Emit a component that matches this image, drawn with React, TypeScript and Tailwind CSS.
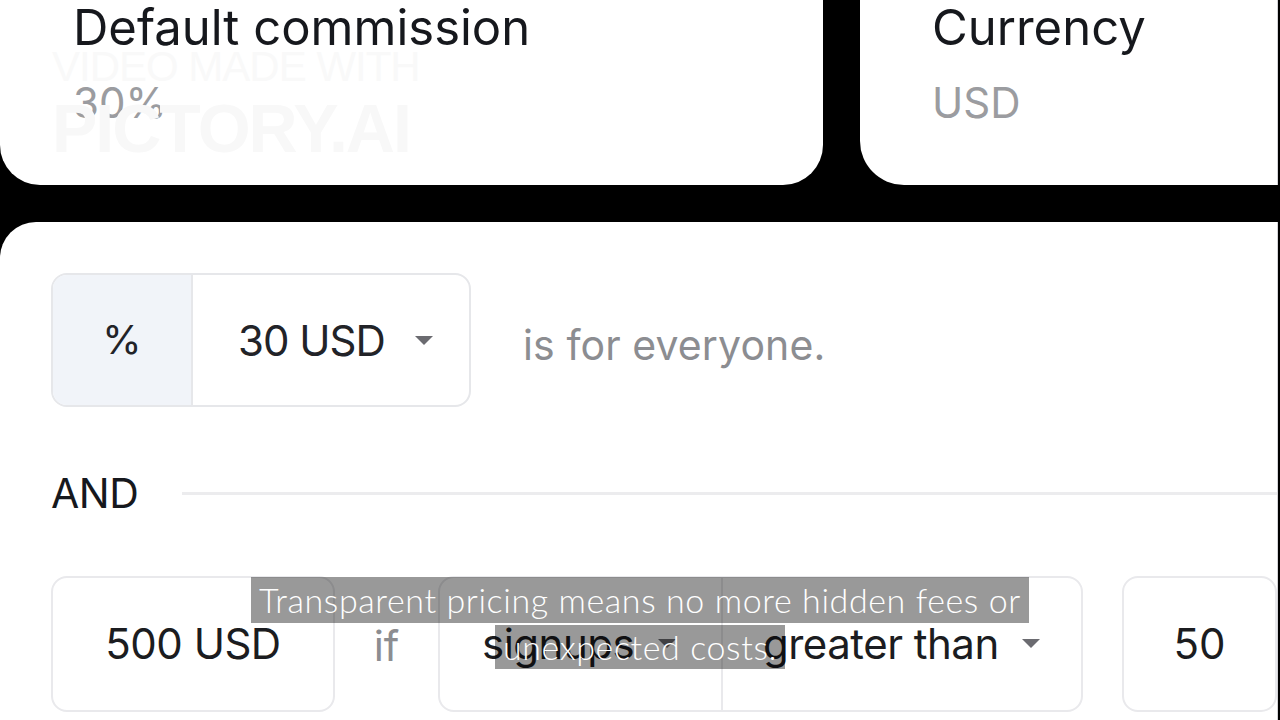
import { useState } from 'react';

const font = { fontFamily: 'Inter, "Noto Sans", sans-serif' };

function Caret({ gap = 'ml-7' }: { gap?: string }) {
  return <span className={`${gap} inline-block h-0 w-0 border-x-[9px] border-t-[9px] border-x-transparent border-t-[#6b6b70]`} />;
}

function InfoCard({ label, value, className }: { label: string; value: string; className: string }) {
  return (
    <div className={`relative h-[185px] bg-white ${className}`}>
      <div className="pt-[3px] text-[49px] leading-[50px] text-[#16181d]">{label}</div>
      <div className="mt-[26px] text-[42px] leading-[48px] text-[#9b9ca0]">{value}</div>
    </div>
  );
}

export default function App() {
  const [unit] = useState('30 USD');

  return (
    <div className="relative h-[720px] w-[1280px] overflow-hidden bg-black" style={font}>
      <div className="flex gap-[37px] pr-[2px]">
        <InfoCard label="Default commission" value="30%" className="w-[823px] rounded-b-[40px] pl-[73px]" />
        <InfoCard label="Currency" value="USD" className="flex-1 rounded-bl-[44px] border-r border-[#d4d4d8] pl-[72px]" />
      </div>

      {/* faint watermark */}
      <div
        className="pointer-events-none absolute left-[52px] top-[46px] leading-none text-[#f9f9f9]"
        style={{ fontFamily: '"Liberation Sans Narrow", "Liberation Sans", sans-serif' }}
      >
        <div className="text-[42px] tracking-[-1px]">VIDEO MADE WITH</div>
        <div className="mt-[6px] text-[68px] font-bold tracking-[-2px] text-[#f8f8f8]">PICTORY.AI</div>
      </div>

      <div className="mt-[37px] mr-[2px] h-[500px] rounded-tl-[36px] border-r border-[#d4d4d8] bg-white pl-[51px] pt-[51px]">
        <div className="flex items-center">
          <div className="flex h-[134px] w-[420px] overflow-hidden rounded-[16px] border-2 border-[#e6e7ea]">
            <div className="flex w-[140px] items-center justify-center border-r-2 border-[#e6e7ea] bg-[#f1f4f9] text-[40px] text-[#222328]">%</div>
            <div className="flex flex-1 items-center pl-[45px] text-[42px] tracking-[-1px] text-[#222328]">
              {unit}
              <Caret gap="ml-[30px]" />
            </div>
          </div>
          <div className="ml-[52px] pt-[12px] text-[41px] tracking-[0.1px] text-[#8c8d91]">is for everyone.</div>
        </div>

        <div className="mt-[56px] flex items-center">
          <div className="text-[41px] tracking-[-0.5px] text-[#16181d]">AND</div>
          <div className="ml-[44px] h-[3px] flex-1 bg-[#ececee]" />
        </div>

        <div className="mt-[51px] flex items-center">
          <div className="flex h-[136px] w-[284px] items-center justify-center rounded-[16px] border-2 border-[#e9e9ec] text-[42px] tracking-[-0.5px] text-[#1b1c20]">
            500 USD
          </div>
          <div className="w-[103px] pt-[4px] text-center text-[42px] text-[#8c8d91]">if</div>
          <div className="flex h-[136px] w-[645px] rounded-[16px] border-2 border-[#e9e9ec] text-[42px] tracking-[-0.5px] text-[#1b1c20]">
            <div className="flex w-[283px] items-center border-r-2 border-[#e9e9ec] pl-[42px]">
              signups
              <Caret gap="ml-[24px]" />
            </div>
            <div className="flex flex-1 items-center pl-[40px]">
              greater than
              <Caret gap="ml-[23px]" />
            </div>
          </div>
          <div className="ml-[39px] flex h-[136px] flex-1 items-center justify-center rounded-[16px] border-2 border-[#e9e9ec] text-[42px] text-[#1b1c20]">
            50
          </div>
        </div>
      </div>

      {/* caption overlay */}
      <div
        className="absolute left-0 right-0 top-[577px] flex flex-col items-center gap-[2px] text-[34px] font-light tracking-[0.6px] text-white"
        style={{ fontFamily: 'Lato, "Noto Sans", sans-serif' }}
      >
        <span className="h-[46px] bg-[rgba(0,0,0,0.4)] px-[8px] leading-[46px]">Transparent pricing means no more hidden fees or</span>
        <span className="h-[44px] bg-[rgba(0,0,0,0.4)] px-[8px] leading-[44px]">unexpected costs.</span>
      </div>
    </div>
  );
}
